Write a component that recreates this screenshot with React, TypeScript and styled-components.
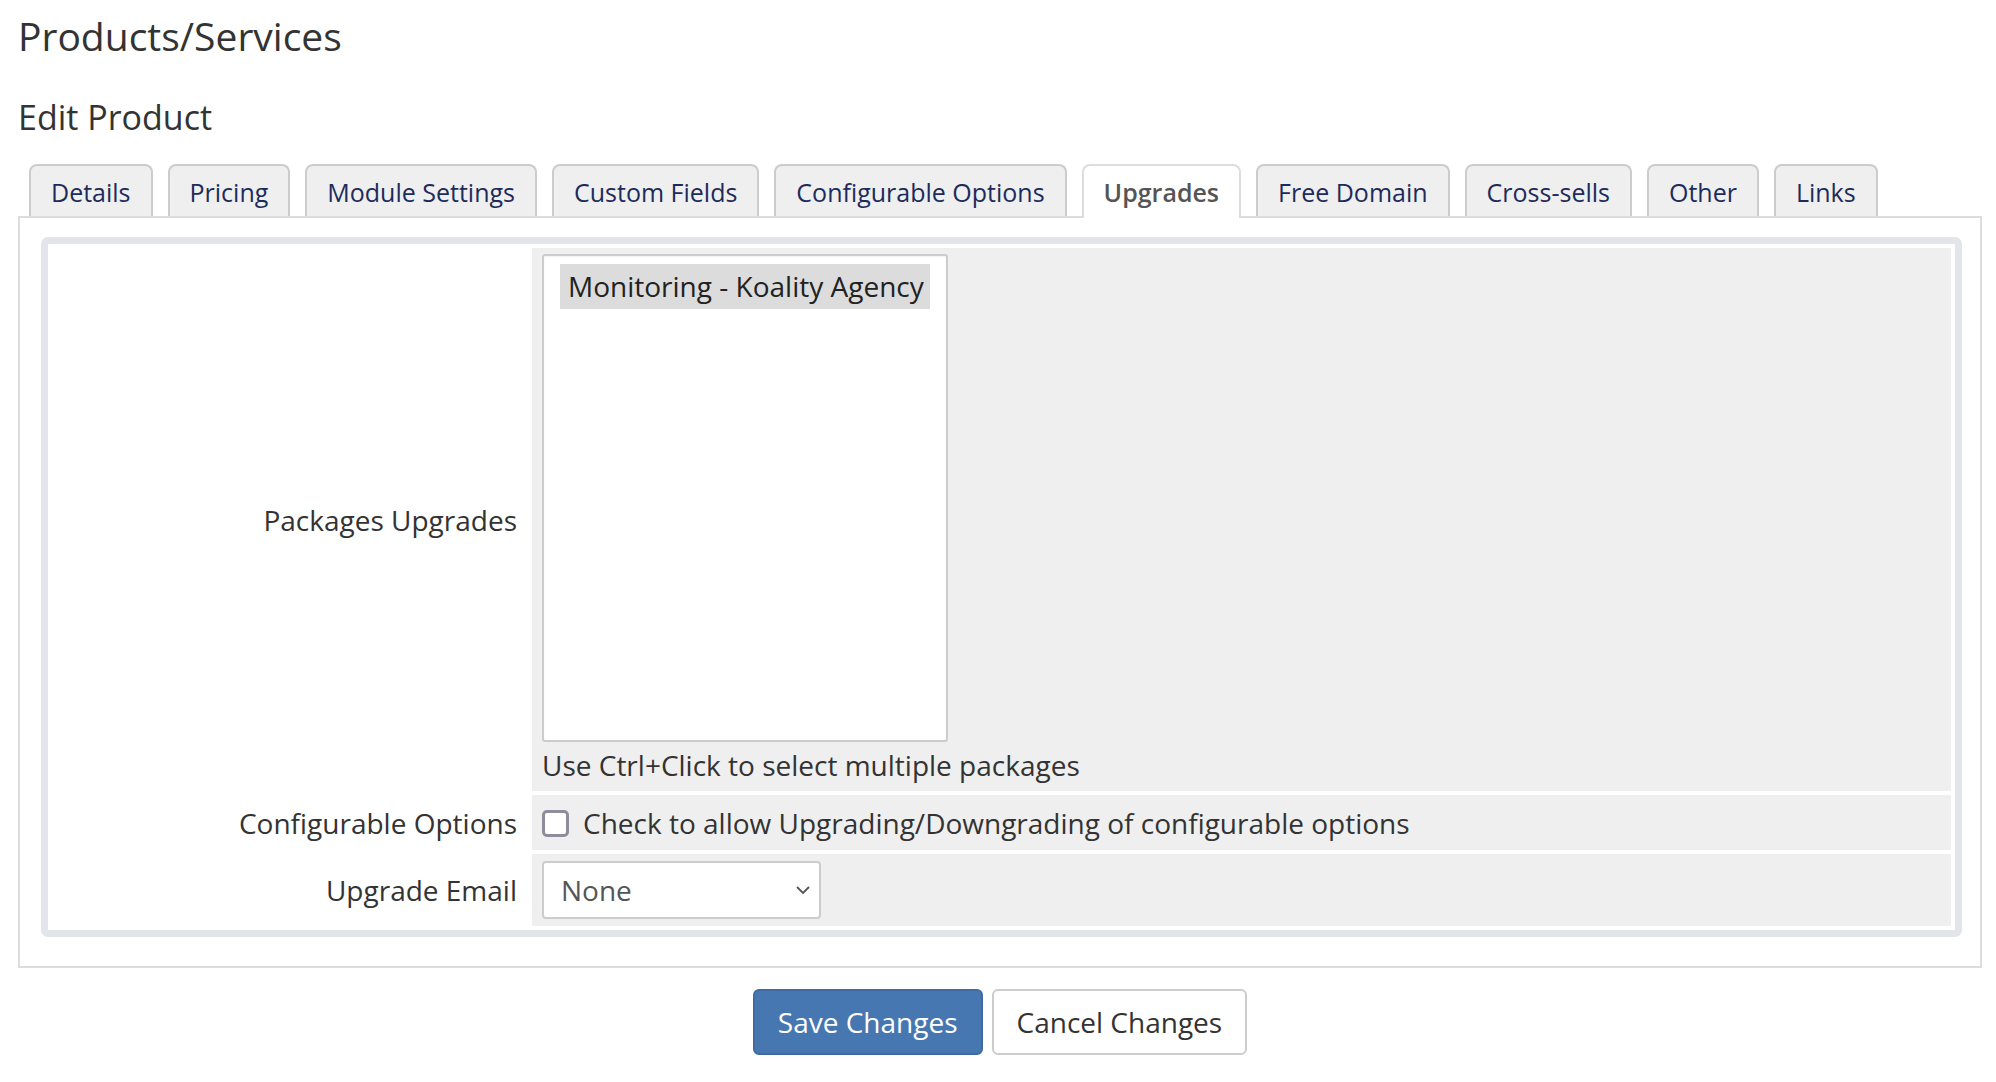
import styled, { createGlobalStyle } from "styled-components";

const GlobalStyle = createGlobalStyle`
  html, body {
    margin: 0;
    padding: 0;
    background: #ffffff;
    font-family: "Open Sans", "Liberation Sans", sans-serif;
    color: #333333;
  }
`;

const Page = styled.div`
  padding: 0 14px 0 18px;
  display: flex;
  flex-direction: column;
`;

const Title = styled.h1`
  margin: 14px 0 0;
  font-size: 39px;
  line-height: 44px;
  font-weight: 400;
  color: #333333;
`;

const SubTitle = styled.h2`
  margin: 39px 0 0;
  font-size: 34px;
  line-height: 40px;
  font-weight: 400;
  color: #333333;
`;

const TabBar = styled.div`
  margin-top: 27px;
  padding-left: 11px;
  display: flex;
  gap: 15px;
  align-items: flex-start;
  position: relative;
  z-index: 1;
`;

const Tab = styled.div<{ $active?: boolean }>`
  box-sizing: border-box;
  height: ${(p) => (p.$active ? "54px" : "52px")};
  padding: 8px 20px 6px;
  font-size: 25px;
  line-height: 36px;
  border: 2px solid ${(p) => (p.$active ? "#dddddd" : "#cccccc")};
  border-bottom: none;
  border-radius: 8px 8px 0 0;
  background: ${(p) => (p.$active ? "#ffffff" : "#efefef")};
  color: ${(p) => (p.$active ? "#555555" : "#1d2b5c")};
  font-weight: ${(p) => (p.$active ? 600 : 400)};
  margin-bottom: ${(p) => (p.$active ? "-2px" : "0")};
  white-space: nowrap;
`;

const Panel = styled.div`
  border: 2px solid #dddddd;
  padding: 19px 18px 29px 21px;
`;

const FormTable = styled.div`
  display: grid;
  grid-template-columns: 476px 1fr;
  gap: 4px;
  padding: 4px;
  border: 7px solid #e2e6ea;
  border-radius: 7px;
  background: #ffffff;
`;

const LabelCell = styled.div`
  display: flex;
  align-items: center;
  justify-content: flex-end;
  padding-right: 11px;
  font-size: 28px;
  line-height: 40px;
  color: #333333;
`;

const FieldCell = styled.div<{ $pad: string }>`
  background: #efefef;
  padding: ${(p) => p.$pad};
  display: flex;
  flex-direction: column;
  align-items: flex-start;
  font-size: 28px;
  line-height: 40px;
  color: #333333;
`;

const ListBox = styled.div`
  width: 406px;
  height: 488px;
  box-sizing: border-box;
  border: 2px solid #cccccc;
  border-radius: 3px;
  background: #ffffff;
  padding: 8px 16px;
  box-shadow: inset 0 1px 2px rgba(0, 0, 0, 0.06);
`;

const ListOption = styled.div`
  background: #dcdcdc;
  padding: 2px 8px 3px;
  font-size: 28px;
  line-height: 40px;
  color: #222222;
  white-space: nowrap;
`;

const HelpText = styled.div`
  margin-top: 3px;
`;

const CheckRow = styled.label`
  display: flex;
  align-items: center;
  gap: 14px;
`;

const CheckBox = styled.span`
  width: 27px;
  height: 27px;
  box-sizing: border-box;
  border: 3px solid #8f8c9b;
  border-radius: 5px;
  background: #ffffff;
  flex: none;
`;

const SelectBox = styled.div`
  width: 279px;
  height: 58px;
  box-sizing: border-box;
  border: 2px solid #cccccc;
  border-radius: 4px;
  background: #ffffff;
  display: flex;
  align-items: center;
  justify-content: space-between;
  padding: 0 8px 0 17px;
  color: #555555;
  font-size: 28px;
`;

const ButtonRow = styled.div`
  margin-top: 21px;
  display: flex;
  justify-content: center;
  gap: 9px;
`;

const Button = styled.button<{ $primary?: boolean }>`
  height: 66px;
  box-sizing: border-box;
  padding: 0 23px;
  font-family: "Open Sans", "Liberation Sans", sans-serif;
  font-size: 28px;
  line-height: 40px;
  border-radius: 6px;
  border: 2px solid ${(p) => (p.$primary ? "#3f6aa2" : "#cccccc")};
  background: ${(p) => (p.$primary ? "#4777b1" : "#ffffff")};
  color: ${(p) => (p.$primary ? "#ffffff" : "#333333")};
  cursor: pointer;
`;

const tabs = [
  "Details",
  "Pricing",
  "Module Settings",
  "Custom Fields",
  "Configurable Options",
  "Upgrades",
  "Free Domain",
  "Cross-sells",
  "Other",
  "Links",
];

function App() {
  return (
    <>
      <GlobalStyle />
      <Page>
        <Title>Products/Services</Title>
        <SubTitle>Edit Product</SubTitle>
        <TabBar>
          {tabs.map((t) => (
            <Tab key={t} $active={t === "Upgrades"}>
              {t}
            </Tab>
          ))}
        </TabBar>
        <Panel>
          <FormTable>
            <LabelCell>Packages Upgrades</LabelCell>
            <FieldCell $pad="6px 10px">
              <ListBox>
                <ListOption>Monitoring - Koality Agency</ListOption>
              </ListBox>
              <HelpText>Use Ctrl+Click to select multiple packages</HelpText>
            </FieldCell>

            <LabelCell>Configurable Options</LabelCell>
            <FieldCell $pad="8px 10px 7px">
              <CheckRow>
                <CheckBox />
                Check to allow Upgrading/Downgrading of configurable options
              </CheckRow>
            </FieldCell>

            <LabelCell>Upgrade Email</LabelCell>
            <FieldCell $pad="7px 10px">
              <SelectBox>
                <span>None</span>
                <svg width="16" height="10" viewBox="0 0 16 10">
                  <path
                    d="M2 2 L8 8 L14 2"
                    fill="none"
                    stroke="#555555"
                    strokeWidth="1.8"
                  />
                </svg>
              </SelectBox>
            </FieldCell>
          </FormTable>
        </Panel>
        <ButtonRow>
          <Button $primary>Save Changes</Button>
          <Button>Cancel Changes</Button>
        </ButtonRow>
      </Page>
    </>
  );
}

export default App;
